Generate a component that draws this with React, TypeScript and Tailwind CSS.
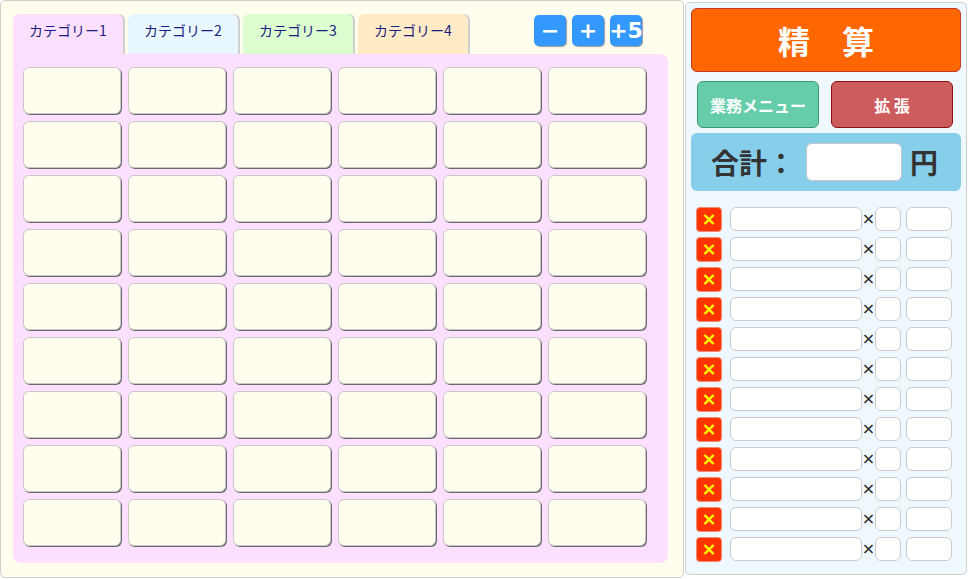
import React from "react";

const tabs = [
  { label: "カテゴリー1", bg: "bg-[#fde0ff]" },
  { label: "カテゴリー2", bg: "bg-[#e8f6ff]" },
  { label: "カテゴリー3", bg: "bg-[#dbfdd0]" },
  { label: "カテゴリー4", bg: "bg-[#ffebc5]" },
];

const font = { fontFamily: '"Noto Sans CJK JP", "Noto Sans", sans-serif' };
const latin = { fontFamily: '"DejaVu Sans", "Noto Sans", sans-serif' };

export default function App() {
  const cells = Array.from({ length: 54 });
  const rows = Array.from({ length: 12 });
  return (
    <div className="flex w-[968px] h-[579px] bg-white overflow-hidden" style={font}>
      {/* Left panel */}
      <div className="w-[684px] h-[578px] border border-[#cfcfcf] rounded-[5px] bg-[#fffeee] pt-[13px] pl-[12px]">
        <div className="flex items-start h-[40px]">
          {tabs.map((t, i) => (
            <div
              key={i}
              className={`w-[110px] h-[40px] mr-[5px] rounded-t-[6px] ${t.bg} shadow-[2px_0_0_#cfcfcf] flex justify-center pt-[6px] text-[14px] leading-[20px] text-[#1c1c80]`}
            >
              {t.label}
            </div>
          ))}
          <div className="flex gap-[6px] ml-[61px] mt-[1px]">
            {["−", "+", "+5"].map((b, i) => (
              <div
                key={i}
                className="w-[32px] h-[31px] rounded-[5px] bg-[#3399ff] shadow-[1px_1px_1px_#9a9a9a] flex items-center justify-center text-white font-bold text-[22px] leading-none"
                style={latin}
              >
                {b}
              </div>
            ))}
          </div>
        </div>
        <div className="w-[655px] h-[509px] bg-[#fde0ff] rounded-b-[8px] rounded-tr-[8px] pt-[13px] pl-[10px]">
          <div className="grid grid-cols-[repeat(6,98px)] gap-x-[7px] gap-y-[7px]">
            {cells.map((_, i) => (
              <div
                key={i}
                className="h-[47px] bg-[#fffeee] border border-[#c8c8c8] rounded-[6px] shadow-[1px_1px_0_#6a6a6a]"
              />
            ))}
          </div>
        </div>
      </div>
      {/* Right panel */}
      <div className="ml-[1px] mt-[2px] w-[282px] h-[573px] border border-[#cfcfcf] rounded-[5px] bg-[#f0f8ff] pt-[5px] pl-[5px]">
        <div className="w-[270px] h-[64px] bg-[#ff6600] border border-[#c0392b] rounded-[6px] flex items-center justify-center text-white font-bold text-[32px] leading-none">
          精　算
        </div>
        <div className="flex gap-[12px] ml-[6px] mt-[9px]">
          <div className="w-[122px] h-[47px] bg-[#66cdaa] border border-[#3a9a6e] rounded-[6px] flex items-center justify-center text-white font-bold text-[16px]">
            業務メニュー
          </div>
          <div className="w-[122px] h-[47px] bg-[#cd5c5c] border border-[#8b1010] rounded-[6px] flex items-center justify-center text-white font-bold text-[16px]">
            拡 張
          </div>
        </div>
        <div className="w-[270px] h-[58px] mt-[5px] bg-[#87ceeb] rounded-[6px] flex items-center pl-[20px] text-[#333] font-bold text-[28px] leading-none">
          <span>合計：</span>
          <div className="w-[96px] h-[38px] bg-white border border-[#c8c8c8] rounded-[6px] ml-[11px]" />
          <span className="ml-[8px]">円</span>
        </div>
        <div className="mt-[16px] ml-[5px] flex flex-col gap-[6px]">
          {rows.map((_, i) => (
            <div key={i} className="flex items-center h-[24px]">
              <div
                className="w-[26px] h-[25px] bg-[#ff3300] border border-[#f08a70] rounded-[4px] flex items-center justify-center text-[#ffff00] font-bold text-[18px] leading-none"
                style={latin}
              >
                ×
              </div>
              <div className="w-[132px] h-[24px] ml-[8px] bg-white border border-[#cccccc] rounded-[6px]" />
              <span
                className="w-[13px] h-[24px] flex items-center justify-center text-[16px] leading-none text-[#222]"
                style={latin}
              >
                ×
              </span>
              <div className="w-[26px] h-[24px] bg-white border border-[#cccccc] rounded-[6px]" />
              <div className="w-[46px] h-[24px] ml-[5px] bg-white border border-[#cccccc] rounded-[6px]" />
            </div>
          ))}
        </div>
      </div>
    </div>
  );
}
